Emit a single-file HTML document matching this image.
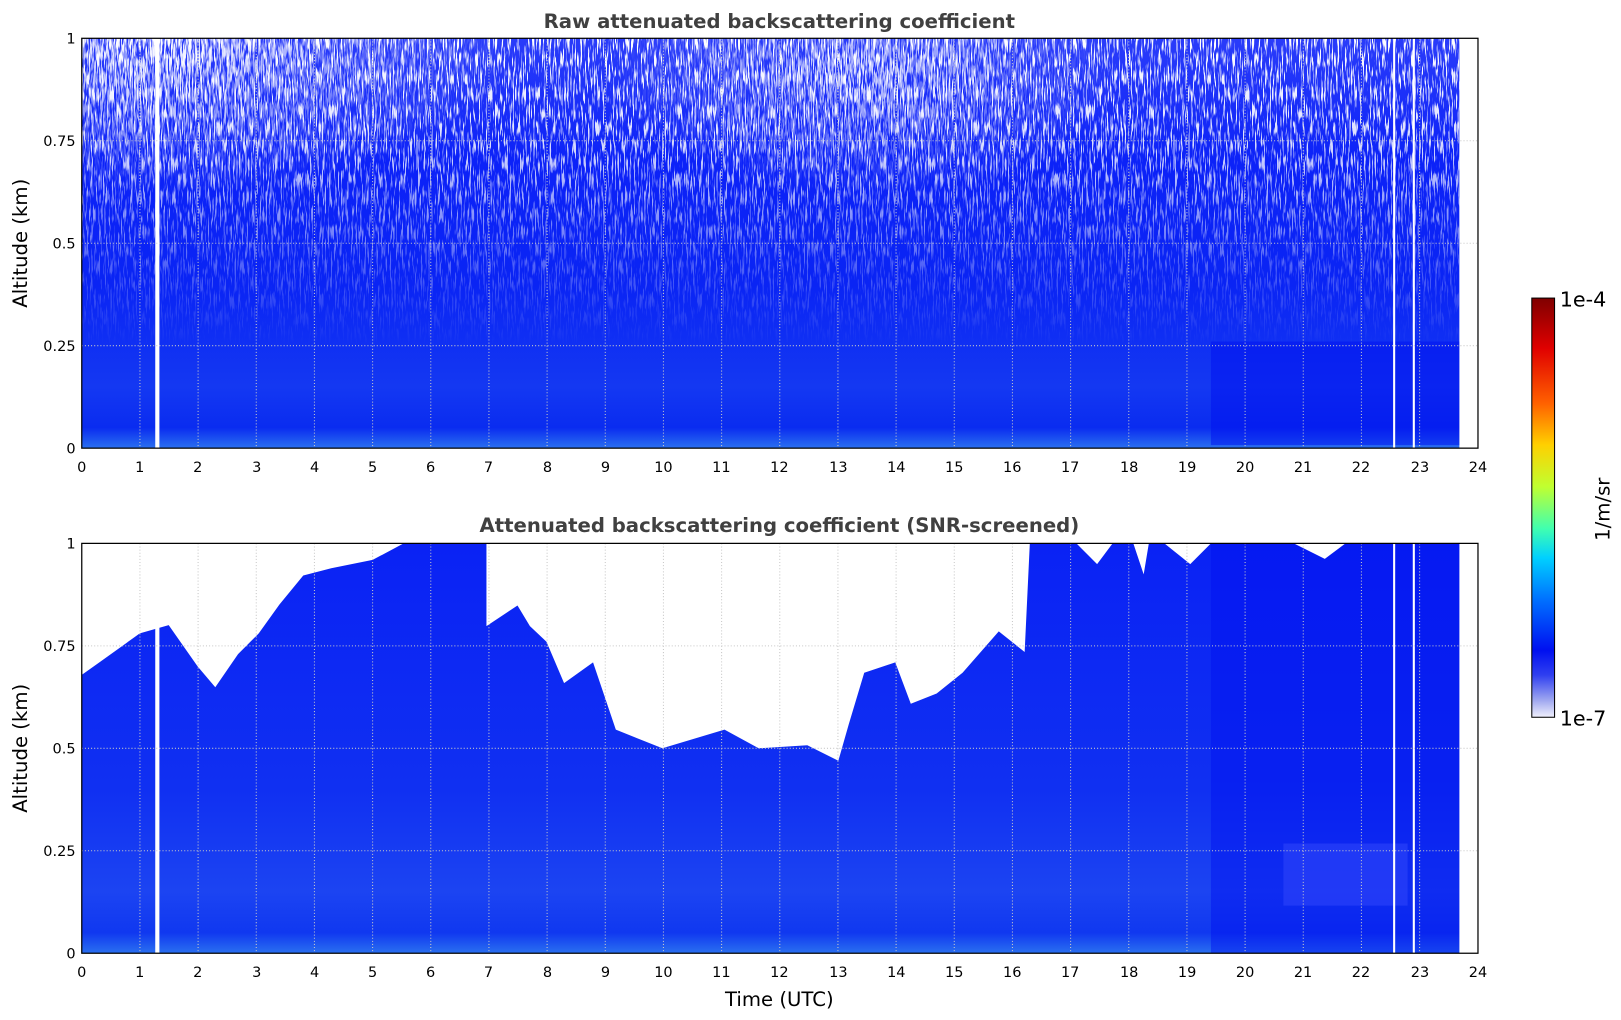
<!DOCTYPE html>
<html><head><meta charset="utf-8"><style>
html,body{margin:0;padding:0;background:#fff;}
svg{display:block;font-family:"DejaVu Sans","Liberation Sans",sans-serif;}
</style></head><body>
<svg width="1621" height="1020" viewBox="0 0 1621 1020" xmlns="http://www.w3.org/2000/svg">
<defs>
<linearGradient id="gTop" x1="0" y1="0" x2="0" y2="1">
<stop offset="0" stop-color="#2a3cfa"/>
<stop offset="0.3" stop-color="#0c22f8"/>
<stop offset="0.6" stop-color="#0a24f4"/>
<stop offset="0.85" stop-color="#1438f2"/>
<stop offset="0.95" stop-color="#0a2cf0"/>
<stop offset="1" stop-color="#2a70f0"/>
</linearGradient>
<linearGradient id="gBot" x1="0" y1="0" x2="0" y2="1">
<stop offset="0" stop-color="#0a22f4"/>
<stop offset="0.6" stop-color="#1030f2"/>
<stop offset="0.85" stop-color="#1c44f2"/>
<stop offset="0.95" stop-color="#1038f0"/>
<stop offset="1" stop-color="#2a70f0"/>
</linearGradient>
<linearGradient id="gCb" x1="0" y1="0" x2="0" y2="1">
<stop offset="0" stop-color="#7f0000"/>
<stop offset="0.12" stop-color="#e00000"/>
<stop offset="0.25" stop-color="#ff6000"/>
<stop offset="0.35" stop-color="#ffd000"/>
<stop offset="0.45" stop-color="#c0ff30"/>
<stop offset="0.55" stop-color="#40ffb0"/>
<stop offset="0.62" stop-color="#00d0ff"/>
<stop offset="0.72" stop-color="#0070ff"/>
<stop offset="0.84" stop-color="#0010f0"/>
<stop offset="0.9" stop-color="#3040f0"/>
<stop offset="0.96" stop-color="#a0a8f0"/>
<stop offset="1" stop-color="#f0f0fc"/>
</linearGradient>
<filter id="speck" x="0" y="0" width="100%" height="100%">
<feTurbulence type="fractalNoise" baseFrequency="0.7 0.06" numOctaves="2" seed="3"/>
<feColorMatrix type="matrix" values="0 0 0 0 1  0 0 0 0 1  0 0 0 0 1  0 0 0 9 -4.8"/>
</filter>
<filter id="speck2" x="0" y="0" width="100%" height="100%">
<feTurbulence type="fractalNoise" baseFrequency="0.8 0.07" numOctaves="2" seed="11"/>
<feColorMatrix type="matrix" values="0 0 0 0 1  0 0 0 0 1  0 0 0 0 1  0 0 0 8 -3.6"/>
</filter>
<linearGradient id="fadeMask" x1="0" y1="0" x2="0" y2="1">
<stop offset="0" stop-color="#fff"/>
<stop offset="0.25" stop-color="#fff" stop-opacity="0.85"/>
<stop offset="0.55" stop-color="#fff" stop-opacity="0.3"/>
<stop offset="0.75" stop-color="#fff" stop-opacity="0"/>
</linearGradient>
<radialGradient id="cornerG" cx="0.1" cy="0" r="0.5">
<stop offset="0" stop-color="#fff"/>
<stop offset="1" stop-color="#fff" stop-opacity="0"/>
</radialGradient>
<radialGradient id="midG" cx="0.55" cy="0.1" r="0.35">
<stop offset="0" stop-color="#fff" stop-opacity="0.8"/>
<stop offset="1" stop-color="#fff" stop-opacity="0"/>
</radialGradient>
<mask id="m1"><rect x="79" y="37" width="1331" height="396" fill="url(#fadeMask)"/></mask>
<mask id="m2"><rect x="79" y="37" width="700" height="300" fill="url(#cornerG)"/><rect x="450" y="37" width="700" height="330" fill="url(#midG)"/></mask>
</defs>
<g transform="scale(1.035)">
<text x="753" y="27" text-anchor="middle" font-size="19" font-weight="bold" fill="#404040">Raw attenuated backscattering coefficient</text>
<rect x="79" y="37" width="1331" height="396" fill="url(#gTop)"/>
<rect x="79" y="37" width="1331" height="396" filter="url(#speck)" mask="url(#m1)"/>
<rect x="79" y="37" width="1331" height="396" filter="url(#speck2)" mask="url(#m2)"/>
<rect x="1170" y="330" width="240" height="100" fill="#0010f0" opacity="0.5"/>
<rect x="150" y="37" width="4" height="396" fill="#fff"/>
<rect x="1346" y="37" width="2" height="396" fill="#fff"/>
<rect x="1365" y="37" width="2" height="396" fill="#fff"/>

<text x="753" y="514" text-anchor="middle" font-size="19" font-weight="bold" fill="#404040">Attenuated backscattering coefficient (SNR-screened)</text>
<rect x="79" y="525" width="1331" height="396" fill="url(#gBot)"/>
<rect x="1170" y="525" width="240" height="396" fill="#0010f0" opacity="0.45"/>
<rect x="1240" y="815" width="120" height="60" fill="#2a40f8" opacity="0.7"/>
<polygon fill="#fff" points="79,525 79,652 96,640 135,612 163,604 191,644 208,664 230,632 250,612 270,584 293,556 320,549 360,541 390,525 470,525 470,605 500,585 512,605 528,620 545,660 573,640 595,705 640,723 700,705 733,723 780,720 810,735 820,700 835,650 865,640 880,680 905,670 930,650 965,610 990,630 995,525"/>
<polygon fill="#fff" points="1095,525 1110,525 1105,555"/>
<polygon fill="#fff" points="1125,525 1170,525 1150,545"/>
<polygon fill="#fff" points="1250,525 1300,525 1280,540"/>
<polygon fill="#fff" points="1040,525 1075,525 1060,545"/>
<rect x="150" y="525" width="4" height="396" fill="#fff"/>
<rect x="1346" y="525" width="2" height="396" fill="#fff"/>
<rect x="1365" y="525" width="2" height="396" fill="#fff"/>

<g stroke="#c8c8c8" stroke-width="1" stroke-dasharray="1,2" fill="none">
<path d="M135.2,37V433M191.4,37V433M247.6,37V433M303.8,37V433M360,37V433M416.2,37V433M472.4,37V433M528.6,37V433M584.8,37V433M641,37V433M697.2,37V433M753.4,37V433M809.6,37V433M865.8,37V433M922,37V433M978.2,37V433M1034.4,37V433M1090.6,37V433M1146.8,37V433M1203,37V433M1259.2,37V433M1315.4,37V433M1371.6,37V433M79,136H1428M79,235H1428M79,334H1428"/>
<path d="M135.2,525V921M191.4,525V921M247.6,525V921M303.8,525V921M360,525V921M416.2,525V921M472.4,525V921M528.6,525V921M584.8,525V921M641,525V921M697.2,525V921M753.4,525V921M809.6,525V921M865.8,525V921M922,525V921M978.2,525V921M1034.4,525V921M1090.6,525V921M1146.8,525V921M1203,525V921M1259.2,525V921M1315.4,525V921M1371.6,525V921M79,624H1428M79,723H1428M79,822H1428"/>
</g>

<rect x="79" y="37" width="1349" height="396" fill="none" stroke="#000" stroke-width="1.2"/>
<rect x="79" y="525" width="1349" height="396" fill="none" stroke="#000" stroke-width="1.2"/>

<g font-size="14" fill="#000" text-anchor="middle">
<g id="xl">
<text x="79" y="456">0</text><text x="135" y="456">1</text><text x="191" y="456">2</text><text x="248" y="456">3</text><text x="304" y="456">4</text><text x="360" y="456">5</text><text x="416" y="456">6</text><text x="472" y="456">7</text><text x="529" y="456">8</text><text x="585" y="456">9</text><text x="641" y="456">10</text><text x="697" y="456">11</text><text x="753" y="456">12</text><text x="810" y="456">13</text><text x="866" y="456">14</text><text x="922" y="456">15</text><text x="978" y="456">16</text><text x="1034" y="456">17</text><text x="1091" y="456">18</text><text x="1147" y="456">19</text><text x="1203" y="456">20</text><text x="1259" y="456">21</text><text x="1315" y="456">22</text><text x="1372" y="456">23</text><text x="1428" y="456">24</text>
</g>
<use href="#xl" y="488"/>
</g>
<g font-size="14" fill="#000" text-anchor="end">
<text x="73" y="42">1</text><text x="73" y="141">0.75</text><text x="73" y="240">0.5</text><text x="73" y="339">0.25</text><text x="73" y="438">0</text>
<text x="73" y="530">1</text><text x="73" y="629">0.75</text><text x="73" y="728">0.5</text><text x="73" y="827">0.25</text><text x="73" y="926">0</text>
</g>
<text transform="translate(26,235) rotate(-90)" text-anchor="middle" font-size="19" fill="#000">Altitude (km)</text>
<text transform="translate(26,723) rotate(-90)" text-anchor="middle" font-size="19" fill="#000">Altitude (km)</text>
<text x="753" y="972" text-anchor="middle" font-size="19" fill="#000">Time (UTC)</text>

<rect x="1480" y="288" width="22" height="405" fill="url(#gCb)" stroke="#000" stroke-width="1"/>
<text x="1507" y="296" font-size="20" fill="#000">1e-4</text>
<text x="1507" y="701" font-size="20" fill="#000">1e-7</text>
<text transform="translate(1555,492) rotate(-90)" text-anchor="middle" font-size="19" fill="#000">1/m/sr</text>
</g>
</svg>
</body></html>
